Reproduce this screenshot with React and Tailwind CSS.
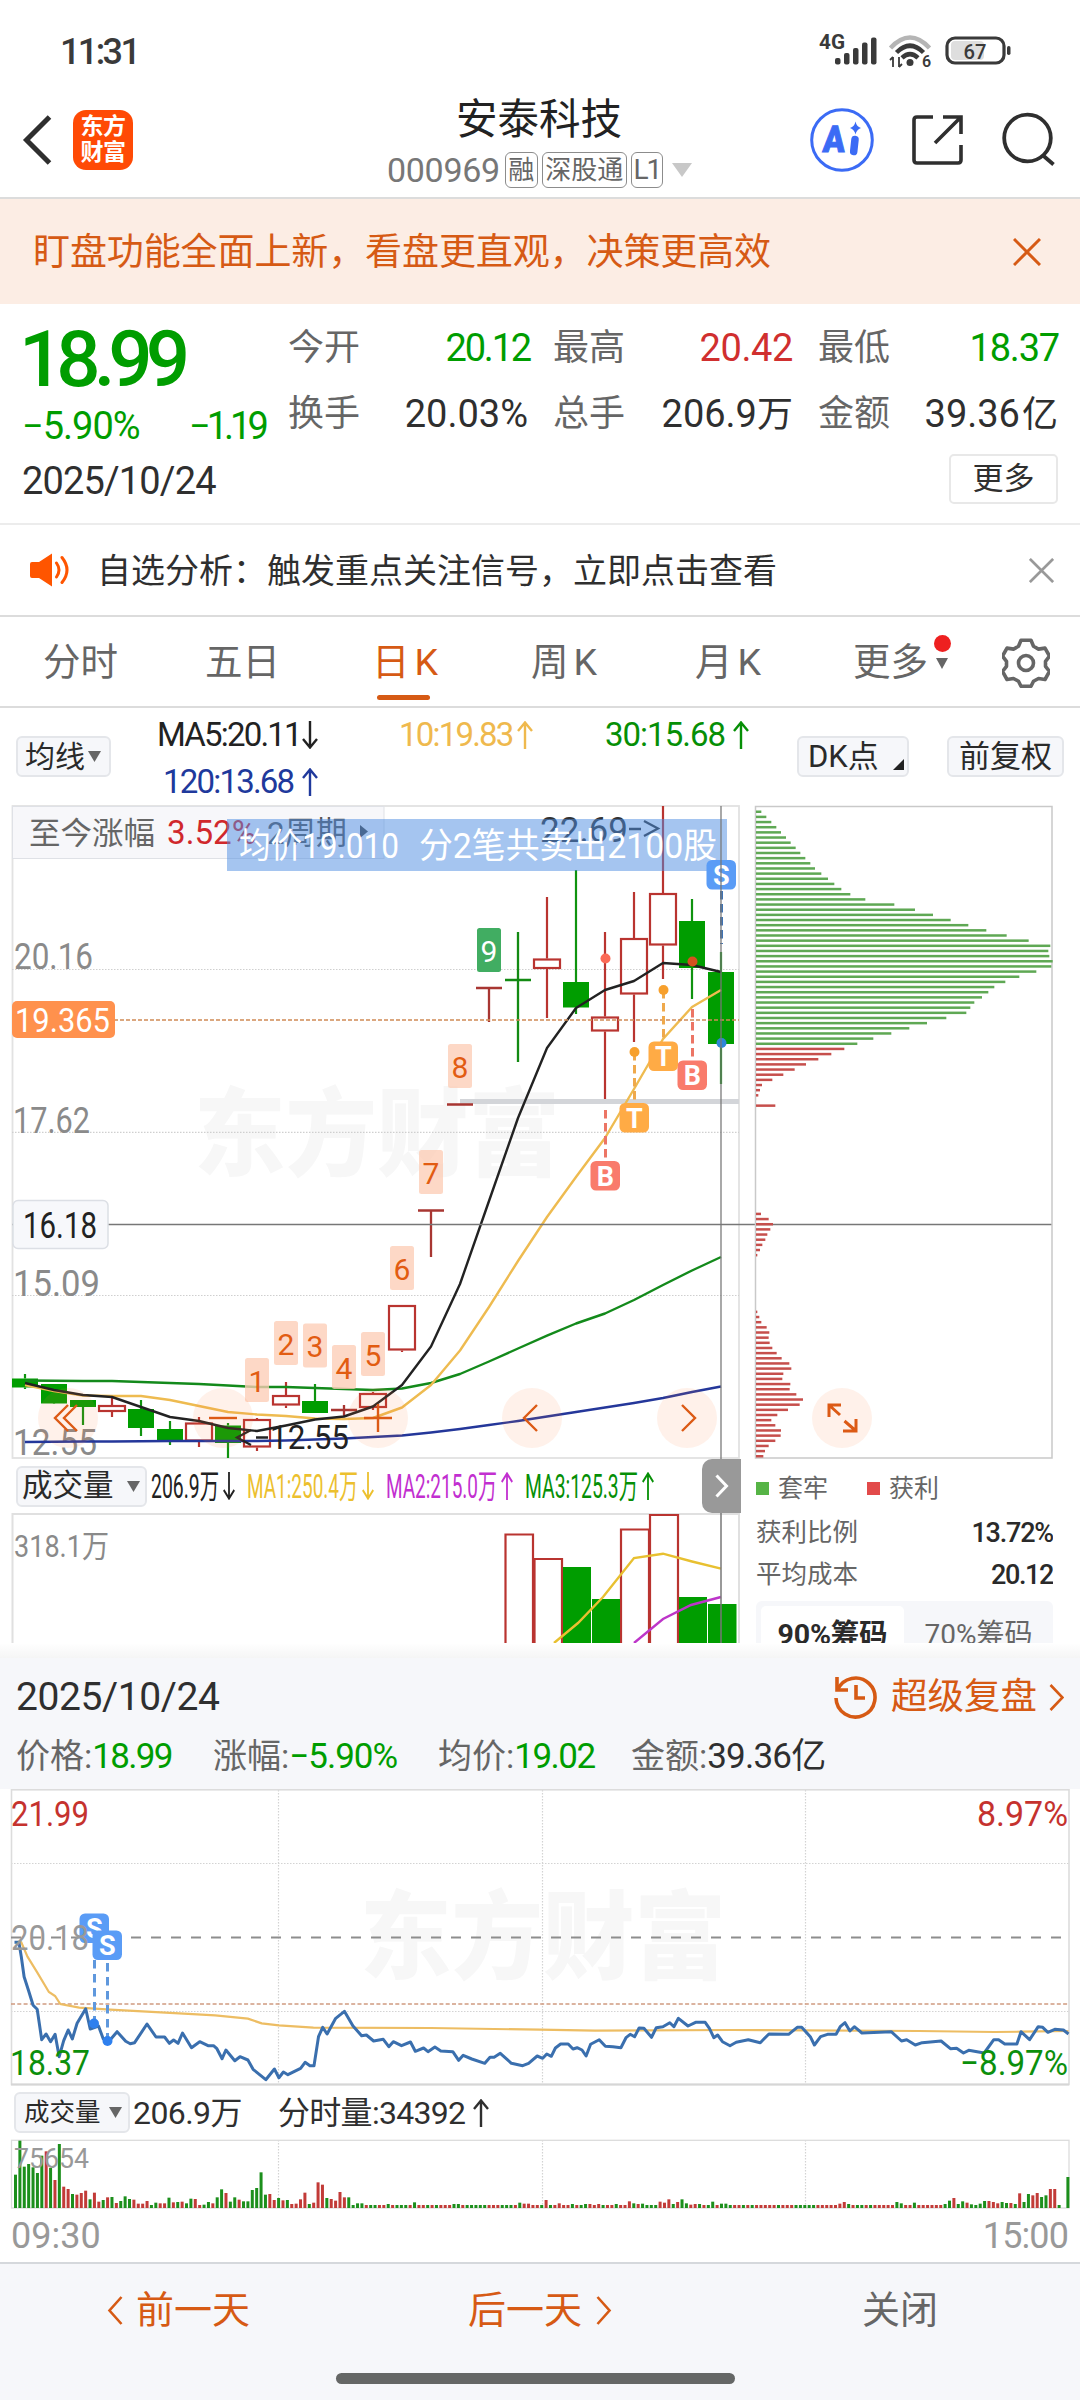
import React from "react";

const UP = "#c5322e";
const DOWN = "#009d00";
const PITCH = 29;
const FIRST_X = 25;

/* [direction, bodyTop, bodyBottom, high, low] */
const CANDLES = [
  ["d", 1378.5, 1387.5, 1374, 1389],
  ["d", 1384, 1403.5, 1384, 1404],
  ["d", 1400, 1407, 1400, 1425],
  ["u", 1405, 1412, 1397, 1417],
  ["d", 1409, 1428, 1400, 1436],
  ["d", 1429, 1442, 1421, 1445],
  ["u", 1422.5, 1441.5, 1417, 1447],
  ["d", 1425.5, 1443, 1423, 1458],
  ["u", 1419, 1447.5, 1418, 1451],
  ["u", 1395, 1405.5, 1382, 1408],
  ["d", 1401, 1413, 1384, 1413],
  ["u", 1410, 1410, 1405, 1417],
  ["u", 1393, 1408, 1392, 1410],
  ["u", 1305, 1350.5, 1305, 1352],
  ["u", 1210.5, 1210.5, 1210, 1257],
  ["u", 1104.5, 1104.5, 1104, 1105],
  ["u", 988, 988, 988, 1022],
  ["d", 980, 980, 932, 1062],
  ["u", 958.5, 969, 897, 1018],
  ["d", 982, 1007.5, 870, 1014],
  ["u", 1016.5, 1031.5, 932, 1099],
  ["u", 938, 994.5, 892, 1042],
  ["u", 893, 945.5, 806, 979],
  ["d", 921, 968, 899, 999],
  ["d", 972, 1044, 952, 1084],
];

const MA5 = [1383, 1390, 1395, 1397, 1407, 1417, 1421, 1428, 1431, 1425.5, 1419.5, 1416.5, 1406.5, 1385, 1346.5, 1284, 1201, 1118, 1048, 1008, 990, 981, 963, 965, 972];
const MA10 = [1385, 1391, 1395.5, 1396, 1396, 1400, 1406, 1412, 1414.5, 1416, 1418.5, 1419, 1418, 1407.5, 1385, 1350.5, 1307, 1261, 1217, 1177, 1138, 1089, 1039, 1007, 990];
const MA30 = [1380.5, 1380.7, 1381, 1381, 1382, 1383, 1384, 1385.5, 1387, 1387, 1388, 1389, 1390, 1388.5, 1383, 1374, 1361.5, 1348.5, 1335.7, 1323.5, 1313.5, 1300, 1285, 1270.5, 1257];
const MA120 = [1442, 1441.7, 1441.5, 1441.5, 1441.3, 1441, 1441, 1441, 1441, 1440.5, 1439.5, 1438.5, 1437, 1435.5, 1432.5, 1429, 1425, 1421, 1416.5, 1412, 1407.5, 1403, 1398, 1392, 1386.5];

const linePoints = (ys) => ys.map((y, i) => `${FIRST_X + i * PITCH},${y}`).join(" ");

const TAGS = [
  ["1", 257, 1358], ["2", 286, 1321], ["3", 315, 1323.5], ["4", 344, 1345], ["5", 373, 1332],
  ["6", 402, 1246], ["7", 431, 1150], ["8", 460, 1044], ["9", 489, 928],
];

const CHIPS_LOSS = [63, 78, 93, 108, 122, 137, 151, 166, 180, 195, 210, 224, 243, 263, 282, 303, 330, 375, 462, 524, 578, 631, 684, 738, 799, 865, 930, 924, 927, 937, 933, 888, 837, 795, 762, 744, 725, 702, 690, 678, 618, 560, 507, 453, 399, 351];
const CHIPS_GAIN = [
  [46, [312, 273, 234, 197, 163, 129, 96, 65, 59, 54]],
  [57, [105]],
  [78, [62, 85, 98, 90, 81, 75, 66, 59, 51]],
  [97, [51, 57, 63, 79, 87, 85, 88, 96, 109, 124, 147, 153, 129, 126, 150, 148, 168, 188, 178, 143, 111, 93, 105, 122, 121, 105, 85, 74, 69]],
];
const chipY = (i) => 811.6 + i * 5.156;

const PRICE = [[42,487],[55,487],[62,530],[70,590],[83,632],[96,676],[108,688],[121,779],[134,762],[147,785],[160,763],[172,830],[185,782],[198,750],[210,777],[224,730],[249,686],[262,747],[286,738],[300,777],[322,777],[340,755],[365,784],[378,791],[391,788],[427,732],[453,771],[478,771],[492,790],[504,780],[517,790],[530,759],[556,803],[580,785],[604,797],[620,797],[630,806],[645,836],[656,810],[682,842],[697,830],[720,840],[735,868],[772,899],[797,867],[810,893],[823,876],[836,884],[873,865],[886,847],[900,857],[912,857],[925,770],[937,742],[950,762],[975,715],[1000,694],[1025,738],[1050,767],[1064,765],[1085,783],[1113,778],[1129,800],[1142,785],[1166,797],[1192,786],[1206,814],[1230,804],[1243,815],[1263,801],[1280,813],[1315,815],[1332,841],[1345,826],[1370,837],[1408,850],[1423,832],[1435,832],[1453,820],[1485,850],[1518,857],[1535,850],[1560,828],[1576,835],[1588,822],[1601,829],[1613,804],[1628,792],[1650,792],[1664,807],[1676,803],[1690,810],[1702,828],[1715,793],[1740,779],[1758,799],[1780,800],[1803,803],[1818,773],[1830,763],[1843,770],[1856,744],[1870,745],[1892,772],[1906,743],[1925,740],[1945,728],[1957,740],[1970,715],[1998,738],[2020,727],[2048,727],[2060,745],[2073,773],[2084,765],[2098,785],[2120,797],[2138,787],[2173,779],[2208,788],[2233,762],[2290,763],[2315,742],[2328,742],[2353,770],[2365,795],[2383,770],[2403,763],[2428,763],[2440,740],[2454,728],[2468,753],[2481,740],[2503,759],[2588,755],[2618,783],[2633,779],[2658,795],[2678,788],[2733,783],[2760,806],[2778,805],[2798,819],[2813,811],[2858,819],[2886,779],[2900,779],[2918,792],[2953,792],[2965,755],[2990,779],[3015,740],[3028,742],[3043,757],[3063,748],[3088,750],[3103,762]];
const AVG = [[58,487],[62,487],[80,530],[108,577],[142,636],[160,648],[175,672],[230,683],[320,689],[520,700],[625,706],[720,716],[760,730],[810,736],[910,743],[1250,744],[1568,749],[1728,752],[2128,750],[2668,753],[2888,756],[2968,755],[3103,753]];
const scalePts = (pts) => pts.map(([x, y]) => `${(x / 2.904).toFixed(1)},${(1780 + y / 3).toFixed(1)}`).join(" ");

const MINUTE_VOL = (
  "g100 g202 g124 g132 g122 g105 g157 r170 g120 r84 g192 r64 r57 g42 r40 r45 r52 g26 r46 r19 g24 r32 g33 r15 g21 g35 g27 r25 r13 r13 r21 g9 g16 r14 r14 g31 r17 g18 r19 g14 g28 r27 r9 g10 g18 r14 g32 g56 r45 g19 g32 r25 g20 g20 g54 g60 g107 g40 r42 r24 g30 r23 g24 r12 r13 r26 r46 g12 r16 r77 r70 g30 r27 r22 r48 r32 g32 g9 g14 g14 " +
  "r9 g9 g9 r9 r9 g12 r9 g9 g9 g9 r9 g17 r9 r9 g9 r9 g9 r9 r9 r9 g12 g12 r9 g9 g9 g9 g9 g9 r9 r9 r9 g9 g9 g9 r9 g16 r13 r13 r9 r9 " +
  "g9 r24 g9 r9 r14 r9 r9 g12 r9 g9 g12 r12 r9 r12 g9 r9 r9 g12 r9 r9 r20 g14 r12 g13 g9 g9 g9 r19 r16 r26 g12 r18 g26 g14 r10 r12 g12 r9 g9 g19 r9 g13 g13 g9 r9 r9 g9 r9 g9 r9 r9 r9 r9 r9 g9 r9 r9 r9 g9 g9 g9 g9 g9 r9 r9 r9 r9 r9 r13 r18 g12 r9 g9 g9 r9 g9 r9 r9 r9 r9 r9 g18 g14 r9 r9 g16 r9 r9 r9 r9 r9 r9 g12 g22 r30 g12 g20 r16 g11 g9 g13 g21 r21 r18 r14 g18 g15 r15 g12 r44 g18 g42 r38 r45 g33 g38 r57 r57 g9 g0 g93"
).split(" ").map((s) => [s[0], Number(s.slice(1))]);

/* Chart label stretched to a known advance width */
function Label({ x, y, w, size = 36, fill = "#999", children, weight = 400 }) {
  return (
    <text x={x} y={y} fontSize={size} fill={fill} fontWeight={weight} textLength={w} lengthAdjust="spacingAndGlyphs">
      {children}
    </text>
  );
}

function Watermark({ x, y }) {
  return (
    <text x={x - 3} y={y} fontSize="96" fontWeight="900" fill="#f7f7f7" textLength="366" lengthAdjust="spacingAndGlyphs">
      东方财富
    </text>
  );
}

function Marker({ x, y, color, children }) {
  return (
    <g>
      <rect x={x} y={y} width="29.5" height="29.5" rx="5.5" fill={color} />
      <text x={x + 14.75} y={y + 24.5} fontSize="27" fontWeight="700" fill="#fff" textAnchor="middle">
        {children}
      </text>
    </g>
  );
}

function StatusBar() {
  return (
    <div className="flex h-[100px] items-center justify-between pl-[60px] pr-[68px]">
      <span className="mt-[4px] text-[36px] font-medium leading-none tracking-[-2.6px] text-[#3a3a3a]">11:31</span>
      <svg width="194" height="44" viewBox="818 28 194 44" fill="#3a3a3a">
        <text x="819" y="49" fontSize="20" fontWeight="700" textLength="26" lengthAdjust="spacingAndGlyphs">4G</text>
        <rect x="835" y="58" width="5.5" height="6.5" rx="2" />
        <rect x="844" y="53" width="5.5" height="11.5" rx="2" />
        <rect x="853" y="48" width="5.5" height="16.5" rx="2" />
        <rect x="862" y="42.500" width="5.5" height="22" rx="2" />
        <rect x="871" y="37.500" width="5.5" height="27" rx="2" />
        <g fill="none" strokeWidth="4.500">
          <path d="M890.500 48Q910 27 929.500 48" stroke="#b5b5b5" />
          <path d="M896.500 52.500Q910 39 923.500 52.500" stroke="#3a3a3a" />
          <path d="M902 57.800Q910 50.500 918 57.800" stroke="#3a3a3a" />
        </g>
        <circle cx="910" cy="62.500" r="3.500" />
        <path d="M893 57v10M890 60l3-3M899 57v10M902 64l-3 3" stroke="#3a3a3a" strokeWidth="1.8" fill="none" />
        <text x="922" y="67" fontSize="16" fontWeight="600">6</text>
        <rect x="947" y="38" width="57" height="25" rx="8" fill="none" stroke="#3a3a3a" strokeWidth="3.200" />
        <rect x="951" y="41" width="33" height="19" rx="4" fill="#dedede" />
        <rect x="1007" y="46" width="3.500" height="9" rx="1.700" />
        <text x="963.500" y="58.500" fontSize="21" fontWeight="500" textLength="23" lengthAdjust="spacingAndGlyphs">67</text>
      </svg>
    </div>
  );
}

function Pill({ children, className = "" }) {
  return (
    <span className={`flex h-[36px] items-center justify-center rounded-[6px] border-[1.5px] border-[#8c8c8c] text-[26px] leading-none text-[#666] ${className}`}>
      {children}
    </span>
  );
}

function Header() {
  return (
    <header className="flex h-[99px] items-start border-b-2 border-[#dcdcdc] pl-[22px] pr-[24px]">
      <svg className="mt-[15px] shrink-0" width="30" height="50" viewBox="22 115 30 50" fill="none" stroke="#2f2f2f" strokeWidth="5">
        <path d="M49.500 117L26.500 140l23 23" />
      </svg>
      <div className="ml-[21px] mt-[10px] flex h-[60px] w-[60px] shrink-0 flex-col items-center justify-center rounded-[13px] bg-[#ff4a05] text-[23px] font-bold leading-[26px] tracking-[-0.500px] text-white">
        <span>东方</span>
        <span>财富</span>
      </div>
      <div className="ml-[254px] flex w-[304px] flex-col items-start">
        <h1 className="ml-[69px] mt-[-2px] whitespace-nowrap text-[41.500px] leading-[44px] text-[#222]">安泰科技</h1>
        <div className="mt-[10px] flex items-center">
          <span className="mr-[5px] text-[34px] leading-none tracking-[-0.300px] text-[#777]">000969</span>
          <Pill className="w-[33px]">融</Pill>
          <Pill className="ml-[4px] w-[85px]">深股通</Pill>
          <Pill className="ml-[4px] w-[32px] text-[28px] tracking-[-2px]">L1</Pill>
          <svg className="ml-[9px]" width="20" height="14" viewBox="0 0 20 14"><path d="M0 0h20L10 14z" fill="#c8c8c8" /></svg>
        </div>
      </div>
      <svg className="ml-auto mt-[8px]" width="66" height="64" viewBox="809 108 66 64">
        <circle cx="842" cy="140" r="30.300" fill="none" stroke="#3b6bf5" strokeWidth="3" />
        <text x="823" y="152" fontSize="37" fontWeight="900" fill="#3b6bf5" stroke="#3b6bf5" strokeWidth="1" transform="skewX(-4) translate(10 0)" textLength="22" lengthAdjust="spacingAndGlyphs">A</text>
        <path d="M855 139.500l-1.300 12" stroke="#3b6bf5" strokeWidth="7.500" strokeLinecap="round" />
        <path d="M855.500 121.500q1 5 5.500 6.500q-4.500 1.500-5.500 6.500q-1-5-5.500-6.500q4.500-1.500 5.500-6.500z" fill="#3b6bf5" />
      </svg>
      <svg className="ml-[35px] mt-[13px]" width="54" height="54" viewBox="910 113 54 54" fill="none" stroke="#2f2f2f" strokeWidth="3.600">
        <path d="M933 117H917q-3 0-3 3v40q0 3 3 3h41q3 0 3-3V145" />
        <path d="M943 117h18v17M961 117L935 143" />
      </svg>
      <svg className="ml-[38px] mt-[12px]" width="54" height="56" viewBox="1001 112 54 56" fill="none" stroke="#2f2f2f" strokeWidth="3.800">
        <circle cx="1026.500" cy="138" r="23.300" />
        <path d="M1041.500 155l11 9.500" />
      </svg>
    </header>
  );
}

function Cross({ size, color, width }) {
  return (
    <svg width={size} height={size} viewBox="0 0 28 28" stroke={color} strokeWidth={width}>
      <path d="M1 1l26 26M27 1L1 27" />
    </svg>
  );
}

function PromoBanner() {
  return (
    <div className="flex h-[105px] items-center justify-between bg-[#fcede4] pl-[33px] pr-[39px]">
      <span className="mt-[1px] whitespace-nowrap text-[37px] leading-none tracking-[-0.1px] text-[#d65a14]">盯盘功能全面上新，看盘更直观，决策更高效</span>
      <Cross size={28} color="#d65a14" width={3} />
    </div>
  );
}

function Stat({ label, value, className = "", valueClass = "" }) {
  return (
    <div className={`flex items-center justify-between whitespace-nowrap leading-none ${className}`}>
      <span className="text-[36px] text-[#666]">{label}</span>
      <span className={valueClass}>{value}</span>
    </div>
  );
}

function Quote() {
  return (
    <section className="h-[221px] border-b-2 border-[#ececec] pl-[22px] pr-[22px]">
      <div className="flex h-[145px]">
        <div className="w-[266px]">
          <div className="ml-[-3px] mt-[16px] text-[78px] font-medium leading-[80px] tracking-[-7px] text-[#009d00]">18.99</div>
          <div className="mt-[6px] flex text-[38px] leading-[40px] text-[#009d00]">
            <span className="w-[167px] tracking-[-1px]">−5.90%</span>
            <span className="tracking-[-4px]">−1.19</span>
          </div>
        </div>
        <div className="mt-[25px] grid h-[104px] grid-cols-[240px_240px_240px] grid-rows-[38px_38px] content-start gap-x-[25px] gap-y-[28px] text-[38px] text-[#2f2f2f]">
          <Stat label="今开" value="20.12" valueClass="mr-[-2px] text-[#009d00] tracking-[-2.200px]" />
          <Stat label="最高" value="20.42" valueClass="text-[#d02f2f] tracking-[-0.400px]" />
          <Stat label="最低" value="18.37" valueClass="mr-[-1px] text-[#009d00] tracking-[-1.200px]" />
          <Stat label="换手" value="20.03%" />
          <Stat label="总手" value={<>206.9<span className="text-[36px]">万</span></>} />
          <Stat label="金额" value={<>39.36<span className="ml-[2px] text-[36px]">亿</span></>} />
        </div>
      </div>
      <div className="mt-[5px] flex items-center justify-between">
        <span className="mt-[3px] text-[38px] leading-none tracking-[-0.850px] text-[#2f2f2f]">2025/10/24</span>
        <span className="flex h-[50px] w-[109px] items-center justify-center rounded-[5px] border-2 border-[#e8e8e8] pb-[1px] text-[31px] leading-none text-[#2f2f2f]">更多</span>
      </div>
    </section>
  );
}

function Notice() {
  return (
    <div className="flex h-[92px] items-center border-b-2 border-[#dcdcdc] pl-[29px] pr-[26px]">
      <svg width="42" height="34" viewBox="28 553 42 34">
        <path d="M31 562h7l13-8.500v33L38 578h-7q-2 0-2-2v-12q0-2 2-2z" fill="#ff5500" />
        <path d="M55.500 563q5 7 0 14M61 557.500q10 12.500 0 25" fill="none" stroke="#ff5500" strokeWidth="3" strokeLinecap="round" />
      </svg>
      <span className="ml-[26px] mt-[2px] whitespace-nowrap text-[34px] leading-none text-[#2f2f2f]">自选分析：触发重点关注信号，立即点击查看</span>
      <span className="ml-auto"><Cross size={25} color="#999" width={3} /></span>
    </div>
  );
}

function Gear() {
  return (
    <svg width="48" height="50" viewBox="-24 -25 48 50" fill="none" stroke="#666" strokeWidth="3.600" strokeLinejoin="round">
      <path d="M-5 -21.500h10l2.500 6 5 2.800 6.500-1 4.500 8-4 5.200v5l4 5.200-4.500 8-6.500-1-5 2.800-2.500 5h-10l-2.500-5-5-2.800-6.500 1-4.500-8 4-5.200v-5l-4-5.200 4.500-8 6.500 1 5-2.800z" transform="translate(0 -1.200)" />
      <circle r="7.500" />
    </svg>
  );
}

function Tabs() {
  return (
    <nav className="flex h-[91px] items-center whitespace-nowrap border-b-2 border-[#dcdcdc] pt-[2px] text-[37.500px] leading-none text-[#666]">
      <span className="ml-[43px] w-[162px]">分时</span>
      <span className="w-[167px]">五日</span>
      <span className="relative w-[159px] text-[#d65a14]">
        日<span className="ml-[5px]">K</span>
        <i className="absolute left-[5px] top-[51px] h-[5px] w-[53px] rounded-full bg-[#d65a14]" />
      </span>
      <span className="w-[164px]">周<span className="ml-[5px]">K</span></span>
      <span className="w-[158px]">月<span className="ml-[5px]">K</span></span>
      <span className="relative w-[149px]">
        更多
        <i className="absolute left-[81px] top-[-9px] h-[17px] w-[17px] rounded-full bg-[#ee2020]" />
        <svg className="absolute left-[83px] top-[14px]" width="12" height="11" viewBox="0 0 12 11"><path d="M0 0h12L6 11z" fill="#666" /></svg>
      </span>
      <Gear />
    </nav>
  );
}

function Chip({ children, className = "" }) {
  return (
    <span className={`flex h-[41px] shrink-0 items-center rounded-[6px] border-2 border-[#e4e6ea] bg-[#f6f7fa] leading-none text-[#2a2a2a] ${className}`}>
      {children}
    </span>
  );
}

function Caret({ className = "" }) {
  return <svg className={className} width="13" height="11" viewBox="0 0 13 11"><path d="M0 0h13L6.500 11z" fill="#666" /></svg>;
}

function Arrow({ up, className = "" }) {
  return (
    <svg className={`inline-block ${className}`} width="16" height="28" viewBox="0 0 16 28" fill="none" stroke="currentColor" strokeWidth="2.400">
      <path d={up ? "M8 28V2M1 10L8 1.500l7 8.500" : "M8 0v26M1 18l7 8.500 7-8.500"} />
    </svg>
  );
}

function Average({ up, className = "", children }) {
  return (
    <span className={`flex items-center justify-between ${className}`}>
      {children}
      <Arrow up={up} />
    </span>
  );
}

function MaRow() {
  return (
    <div className="flex h-[97px] items-center whitespace-nowrap pl-[16px] pr-[16px]">
      <Chip className="w-[95px] pl-[7px] text-[30px]">均线<Caret className="ml-[3px]" /></Chip>
      <div className="ml-[46px] grid w-[640px] shrink-0 grid-cols-[242px_206px_192px] gap-y-[13px] pt-[4px] text-[33px] leading-[34px]">
        <Average className="w-[161px] tracking-[-1.800px] text-[#222]">MA5:20.11</Average>
        <Average up className="w-[134px] tracking-[-1.800px] text-[#efb94e]">10:19.83</Average>
        <Average up className="w-[144px] tracking-[-1px] text-[#068f06]">30:15.68</Average>
        <Average up className="w-[161px] pl-[6px] tracking-[-1.800px] text-[#20399c]">120:13.68</Average>
      </div>
      <Chip className="w-[112px] pl-[9px] text-[31px]">
        DK点
        <svg className="ml-auto mr-[3px] mt-[16px]" width="11" height="11" viewBox="0 0 11 11"><path d="M11 0v11H0z" fill="#222" /></svg>
      </Chip>
      <Chip className="ml-auto w-[117px] justify-center text-[31px]">前复权</Chip>
    </div>
  );
}

function Candle({ i, data }) {
  const [dir, top, bottom, high, low] = data;
  const x = FIRST_X + i * PITCH;
  const up = dir === "u";
  const color = up ? UP : DOWN;
  if (bottom === top) {
    return (
      <g stroke={up ? "#a83632" : "#138a13"} strokeWidth="2.300">
        <path d={`M${x - 13} ${top}h26M${x} ${high}V${low}`} />
      </g>
    );
  }
  return (
    <g stroke={up ? "#b93430" : "#0f930f"} strokeWidth="2.200">
      <path d={`M${x} ${high}V${top}M${x} ${bottom}V${low}`} />
      {up ? (
        <rect x={x - 13} y={top + 1} width="26" height={bottom - top - 2} fill="none" />
      ) : (
        <rect x={x - 13} y={top} width="26" height={bottom - top} fill={color} stroke="none" />
      )}
    </g>
  );
}

function KLineChart() {
  return (
    <svg className="block" width="1080" height="655" viewBox="0 805 1080 655">
      <Watermark x="197" y="1168" />
      <rect x="12.500" y="806" width="726.500" height="652" fill="none" stroke="#e2e2e2" strokeWidth="1.800" />
      <g stroke="#cfcfcf" strokeWidth="1.200" strokeDasharray="1.500 1.500">
        <path d="M12 969.500H739M12 1132.300H739M12 1295.500H739" />
      </g>
      <rect x="12.500" y="806.500" width="371.500" height="52" fill="#f7f7fa" stroke="#dfe1e6" strokeWidth="1" />
      <Label x={29} y={844} w={126} size={31} fill="#666">至今涨幅</Label>
      <Label x={167} y={844} w={89} size={34} fill="#d0282c">3.52%</Label>
      <Label x={267} y={844} w={80} size={32} fill="#555">2周期</Label>
      <path d="M360 825v13l8-6.500z" fill="#444" />

      <Label x={14} y={969} w={79} size={36} fill="#8a8a8a">20.16</Label>
      <Label x={13} y={1133} w={77} size={36} fill="#8a8a8a">17.62</Label>
      <Label x={13} y={1296} w={87} size={36} fill="#8a8a8a">15.09</Label>
      <Label x={13} y={1455} w={84} size={36} fill="#8a8a8a">12.55</Label>

      <rect x="460" y="1099" width="279" height="5" fill="#d3d5d9" />

      {CANDLES.map((c, i) => <Candle key={i} i={i} data={c} />)}

      <Label x={540} y={842} w={88} size={35} fill="#333">22.69</Label>
      <path d="M629 829h12M644 821l14 7.500-14 7.500" fill="none" stroke="#333" strokeWidth="2.300" />

      <g fill="none" strokeWidth="2.400" strokeLinejoin="round">
        <polyline points={linePoints(MA120)} stroke="#24379a" />
        <polyline points={linePoints(MA30)} stroke="#138a1b" />
        <polyline points={linePoints(MA10)} stroke="#eebb50" />
        <polyline points={linePoints(MA5)} stroke="#222" />
      </g>

      {TAGS.map(([n, x, y]) => (
        <g key={n}>
          <rect x={x - 12} y={y} width="24" height="44" rx="2.500" fill={n === "9" ? "#41ad62" : "#fdcdb6"} fillOpacity={n === "9" ? 1 : 0.78} />
          <text x={x} y={y + 33.500} fontSize="30" textAnchor="middle" fill={n === "9" ? "#fff" : "#e25c12"}>{n}</text>
        </g>
      ))}

      <path d="M12 1020H739" stroke="#cf8a55" strokeWidth="1.500" strokeDasharray="4 2" />
      <rect x="12" y="1001" width="103" height="37" rx="5" fill="#ff914d" />
      <Label x={15} y={1032} w={95} size={34} fill="#fff">19.365</Label>

      <path d="M251 1430l-14 7.500 14 7.500M256 1437.500h12" fill="none" stroke="#222" strokeWidth="2.300" />
      <Label x={270} y={1449} w={79} size={34} fill="#222">12.55</Label>

      <g fill="#ff7b3d" fillOpacity="0.11">
        <circle cx="68" cy="1418" r="30" />
        <circle cx="223" cy="1418" r="30" />
        <circle cx="378" cy="1418" r="30" />
        <circle cx="532" cy="1418" r="30" />
        <circle cx="687" cy="1418" r="30" />
        <circle cx="842" cy="1418" r="30" />
      </g>
      <g fill="none" stroke="#dc5a15" strokeWidth="2.400">
        <path d="M68 1405l-13 13 13 13M77 1405l-13 13 13 13" />
        <path d="M209 1418h28" />
        <path d="M364 1418h28M378 1404v28" />
        <path d="M537 1405l-13 13 13 13" />
        <path d="M682 1405l13 13-13 13" />
        <path d="M841 1405H829v12M829 1405l11 10M843 1431h13v-12M856 1431l-11.500-10" strokeWidth="3" />
      </g>

      <path d="M12 1224.500H1052" stroke="#777" strokeWidth="1.500" />
      <rect x="13" y="1200.500" width="95" height="48" rx="5" fill="#f7f8fb" stroke="#dcdfe5" strokeWidth="1.500" />
      <Label x={23} y={1238} w={74} size={36} fill="#222">16.18</Label>

      <g fill="none" strokeWidth="3" strokeDasharray="8.500 4.500">
        <path d="M605.500 1110V1160" stroke="#ec7565" />
        <path d="M692.500 1009V1059" stroke="#ec7565" />
        <path d="M634.500 1052V1102" stroke="#efa94c" />
        <path d="M663.500 990V1041" stroke="#efa94c" />
      </g>
      <circle cx="605.500" cy="958.500" r="5" fill="#fb6a56" />
      <circle cx="692.500" cy="961.500" r="5" fill="#d4501f" />
      <circle cx="634.500" cy="1052" r="5" fill="#f7a02c" />
      <circle cx="663.500" cy="990" r="5" fill="#f7a02c" />
      <circle cx="721.500" cy="1043" r="5" fill="#2f86d6" />
      <Marker x={590.500} y={1161} color="#f97b6b">B</Marker>
      <Marker x={677.500} y={1060.500} color="#f97b6b">B</Marker>
      <Marker x={619.500} y={1103} color="#ffab45">T</Marker>
      <Marker x={648.500} y={1041.500} color="#ffab45">T</Marker>

      <rect x="227" y="819" width="500" height="52" fill="#4b8be2" fillOpacity="0.5" />
      <Label x={239} y={858} w={160} size={35} fill="#fff">均价19.010</Label>
      <Label x={419} y={858} w={298} size={35} fill="#fff">分2笔共卖出2100股</Label>
      <path d="M721.500 891V944" stroke="#3f73b3" strokeWidth="3" strokeDasharray="8.500 4.500" />
      <Marker x={706.500} y={860} color="#5a9cf6">S</Marker>
      <path d="M721 806V1460" stroke="#777" strokeOpacity="0.75" strokeWidth="1.700" />

      <rect x="755.500" y="806.500" width="296.500" height="651.500" fill="none" stroke="#c9c9c9" strokeWidth="1.500" />
      {CHIPS_LOSS.map((r, i) => (
        <rect key={i} x="756" y={chipY(i) - 1.100} width={(r - 47) / 3} height="2.500" fill="#5fa854" />
      ))}
      {CHIPS_GAIN.map(([start, list]) =>
        list.map((r, k) => (
          <rect key={start + k} x="756" y={chipY(start + k) - 1.100} width={(r - 47) / 3} height="2.500" fill="#c64f4c" />
        ))
      )}
    </svg>
  );
}

function Narrow({ children, className = "", arrow }) {
  return (
    <span className={`flex shrink-0 items-center ${className}`}>
      {children}
      <Arrow up={arrow === "up"} className="ml-[2px] scale-x-75" />
    </span>
  );
}

function Squeeze({ width, color, children }) {
  return (
    <svg width={width} height="36" viewBox={`0 0 ${width} 36`}>
      <text x="0" y="30" fontSize="33" fill={color} textLength={width} lengthAdjust="spacingAndGlyphs">{children}</text>
    </svg>
  );
}

function VolumePanel() {
  return (
    <div className="w-[741px]">
      <div className="flex h-[54px] items-center pl-[16px]">
        <Chip className="w-[131px] pl-[4px] text-[30.500px]">成交量<Caret className="ml-[13px]" /></Chip>
        <Narrow className="ml-[4px] w-[96px] text-[#222]" arrow="down"><Squeeze width={68} color="#222">206.9万</Squeeze></Narrow>
        <Narrow className="w-[139px] text-[#ecc02e]" arrow="down"><Squeeze width={111} color="#ecc02e">MA1:250.4万</Squeeze></Narrow>
        <Narrow className="w-[139px] text-[#c22fd0]" arrow="up"><Squeeze width={111} color="#c22fd0">MA2:215.0万</Squeeze></Narrow>
        <Narrow className="w-[139px] text-[#068f06]" arrow="up"><Squeeze width={113} color="#068f06">MA3:125.3万</Squeeze></Narrow>
        <span className="ml-auto flex h-[54px] w-[39px] items-center justify-center rounded-l-[10px] bg-[#999]">
          <svg width="14" height="24" viewBox="0 0 14 24" fill="none" stroke="#fff" strokeWidth="3"><path d="M1.500 1.500l10 10.500-10 10.500" /></svg>
        </span>
      </div>
      <svg className="block" width="741" height="130" viewBox="0 1513 741 130">
        <path d="M12.500 1643V1514H739V1643" fill="none" stroke="#e0e0e0" strokeWidth="2" />
        <Label x={14} y={1557} w={95} size={31} fill="#8a8a8a">318.1万</Label>
        <g fill="none" stroke="#b93430" strokeWidth="2.200">
          <path d="M505.500 1650V1534.500H533V1650" />
          <path d="M534.500 1650V1559H562V1650" />
          <path d="M621 1650V1529.500H649V1650" />
          <path d="M650 1650V1515H678V1650" />
        </g>
        <g fill={DOWN}>
          <rect x="563" y="1567" width="28" height="80" />
          <rect x="592" y="1599" width="28" height="50" />
          <rect x="679" y="1597" width="28" height="50" />
          <rect x="708" y="1604" width="28.500" height="50" />
        </g>
        <g fill="none" strokeWidth="2.400">
          <polyline points="554,1643 578,1623 603,1597 634,1558 663,1553.700 692,1561.500 721,1568.700" stroke="#e8c030" />
          <polyline points="634,1643 663,1619 691,1605 721,1597" stroke="#bd35c9" />
        </g>
        <path d="M721 1513V1643" stroke="#777" strokeWidth="1.500" />
      </svg>
    </div>
  );
}

function CostPanel() {
  return (
    <div className="ml-[15px] h-[184px] w-[297px] overflow-hidden whitespace-nowrap text-[25px] leading-none text-[#666]">
      <div className="mt-[15px] flex h-[28px] items-center">
        <i className="mr-[9px] h-[13px] w-[13px] bg-[#56b446]" />套牢
        <i className="ml-[39px] mr-[9px] h-[13px] w-[13px] bg-[#e24a4a]" />获利
      </div>
      <div className="mt-[18px] flex h-[26px] items-center justify-between text-[25.500px]">
        获利比例<b className="text-[27px] font-medium tracking-[-1.200px] text-[#2a2a2a]">13.72%</b>
      </div>
      <div className="mt-[16px] flex h-[26px] items-center justify-between text-[25.500px]">
        平均成本<b className="text-[27px] font-medium tracking-[-1.400px] text-[#2a2a2a]">20.12</b>
      </div>
      <div className="mt-[13px] flex h-[60px] rounded-t-[6px] bg-[#f6f7fa] pl-[5px] pt-[5px]">
        <div className="flex h-[58px] w-[143px] items-center justify-center rounded-[5px] bg-white text-[28.500px] font-bold tracking-[-0.200px] text-[#2a2a2a]">90%筹码</div>
        <div className="flex h-[58px] flex-1 items-center justify-center text-[28px]">70%筹码</div>
      </div>
    </div>
  );
}

function Pair({ label, value, className = "", valueClass = "" }) {
  return (
    <span className={`flex items-center ${className}`}>
      <span className="text-[34px] text-[#666]">{label}</span>
      <span className={`text-[35px] ${valueClass}`}>{value}</span>
    </span>
  );
}

function SheetHeader() {
  return (
    <div className="h-[131px] whitespace-nowrap bg-[#f6f7fa] pl-[16px] pr-[16px]">
      <div className="flex h-[76px] items-center pt-[2px]">
        <span className="text-[39px] leading-none tracking-[-0.400px] text-[#2f2f2f]">2025/10/24</span>
        <svg className="ml-auto" width="46" height="46" viewBox="831 1674 46 46" fill="none" stroke="#d65a14" strokeWidth="3.600">
          <path d="M836.500 1690A19.500 19.500 0 1 1 835 1698" />
          <path d="M836 1677v13h11" />
          <path d="M855 1685v13h9" />
        </svg>
        <span className="ml-[13px] text-[36.500px] leading-none text-[#d65a14]">超级复盘</span>
        <svg className="ml-[12px]" width="15" height="27" viewBox="0 0 15 27" fill="none" stroke="#d65a14" strokeWidth="2.600"><path d="M1.500 1l12 12.500-12 12.500" /></svg>
      </div>
      <div className="flex h-[44px] items-center leading-none">
        <Pair className="w-[197px]" label="价格:" value="18.99" valueClass="tracking-[-1.700px] text-[#009d00]" />
        <Pair className="w-[225px]" label="涨幅:" value="−5.90%" valueClass="tracking-[-1px] text-[#009d00]" />
        <Pair className="w-[193px]" label="均价:" value="19.02" valueClass="tracking-[-1.500px] text-[#009d00]" />
        <Pair label="金额:" value="39.36亿" valueClass="tracking-[-0.800px] text-[#2f2f2f]" />
      </div>
    </div>
  );
}

function MinuteChart() {
  return (
    <svg className="block" width="1080" height="297" viewBox="0 1789 1080 297">
      <Watermark x="363" y="1971" />
      <g fill="none" stroke="#d3d3d3" strokeWidth="1.200" strokeDasharray="1.500 1.500">
        <path d="M11 1863.500H1069M11 2011.500H1069M278.500 1790V2084M542.500 1790V2084M805.500 1790V2084" />
      </g>
      <rect x="11.500" y="1789.800" width="1057.500" height="294.700" fill="none" stroke="#dcdcdc" strokeWidth="1.600" />
      <path d="M11 2084.500H1069" stroke="#d6d6d6" strokeWidth="2" />
      <path d="M11 1937.500H1067" stroke="#8e8e8e" strokeWidth="2" strokeDasharray="10 10" />
      <path d="M11 2004H1069" stroke="#cf9a80" strokeWidth="1.500" strokeDasharray="4 2.300" />
      <polyline points={scalePts(AVG)} fill="none" stroke="#edbd63" strokeWidth="2.200" />
      <polyline points={scalePts(PRICE)} fill="none" stroke="#3a6fae" strokeWidth="3" strokeLinejoin="round" />
      <g stroke="#5f98dd" strokeWidth="3" strokeDasharray="8.500 5.500">
        <path d="M94.500 1960V2020M107.500 1963V2040" />
      </g>
      <circle cx="94" cy="2023.500" r="5" fill="#2f80ee" />
      <circle cx="107.500" cy="2041" r="5" fill="#2f80ee" />
      <Marker x={79.500} y={1913.500} color="#5a9cf6">S</Marker>
      <Marker x={92.500} y={1930.500} color="#5a9cf6">S</Marker>
      <Label x={11} y={1826} w={78} size={35} fill="#c5322e">21.99</Label>
      <Label x={11} y={1950} w={78} size={35} fill="#999">20.18</Label>
      <Label x={10} y={2075} w={80} size={35} fill="#0c8f0c">18.37</Label>
      <Label x={977} y={1826} w={91} size={35} fill="#c5322e">8.97%</Label>
      <Label x={960} y={2075} w={108} size={35} fill="#0c8f0c">−8.97%</Label>
    </svg>
  );
}

function MinuteVolume() {
  return (
    <>
      <div className="flex h-[53px] items-center pl-[14px] text-[32px] leading-none text-[#2f2f2f]">
        <Chip className="w-[116px] pl-[8px] text-[25.500px]">成交量<Caret className="ml-[8px]" /></Chip>
        <span className="ml-[3px] w-[145px] tracking-[-0.600px]">206.9万</span>
        <span className="tracking-[-0.700px]">分时量:34392</span>
        <Arrow up className="ml-[8px]" />
      </div>
      <svg className="block" width="1080" height="71" viewBox="0 2139 1080 71">
        <path d="M278.500 2140V2208M542.500 2140V2208M805.500 2140V2208" stroke="#d3d3d3" strokeWidth="1.200" strokeDasharray="1.500 1.500" />
        <rect x="11.500" y="2140.300" width="1057.500" height="67.700" fill="none" stroke="#dcdcdc" strokeWidth="1.300" />
        {MINUTE_VOL.map(([c, h], i) => (
          <rect key={i} x={15.500 + i * 4.385 - 1.500} y={2208 - h / 3} width="3" height={h / 3} fill={c === "g" ? "#1c8f1c" : "#c23b38"} />
        ))}
        <Label x={14} y={2168} w={75} size={27} fill="#999">75654</Label>
      </svg>
      <div className="flex h-[52px] items-start justify-between pl-[11px] pr-[12px] pt-[8px] text-[36px] leading-[36px] text-[#999]">
        <span>09:30</span>
        <span className="tracking-[-0.900px]">15:00</span>
      </div>
    </>
  );
}

function Footer() {
  return (
    <footer className="h-[139px] border-t-2 border-[#d5d8dc] bg-[#f6f7fa]">
      <div className="grid h-[92px] grid-cols-3 items-center text-[38px] leading-none text-[#d65a14]">
        <span className="flex items-center justify-center gap-[13px] pr-[3px]">
          <svg width="16" height="29" viewBox="0 0 16 29" fill="none" stroke="currentColor" strokeWidth="2.600"><path d="M14.500 1l-12 13.500 12 13.500" /></svg>
          前一天
        </span>
        <span className="flex items-center justify-center gap-[14px]">
          后一天
          <svg width="16" height="29" viewBox="0 0 16 29" fill="none" stroke="currentColor" strokeWidth="2.600"><path d="M1.500 1l12 13.500-12 13.500" /></svg>
        </span>
        <span className="text-center text-[#666]">关闭</span>
      </div>
      <div className="mx-auto mt-[17px] h-[11px] w-[399px] translate-x-[-5px] rounded-full bg-[#656766]" />
    </footer>
  );
}

export default function App() {
  return (
    <div className="h-[2400px] w-[1080px] overflow-hidden bg-white font-['Roboto','Noto_Sans_CJK_SC',sans-serif]">
      <StatusBar />
      <Header />
      <PromoBanner />
      <Quote />
      <Notice />
      <Tabs />
      <MaRow />
      <KLineChart />
      <div className="mt-[-1px] flex h-[184px] overflow-hidden">
        <VolumePanel />
        <CostPanel />
      </div>
      <div className="h-[15px] bg-gradient-to-b from-white to-[#f5f5f5]" />
      <SheetHeader />
      <MinuteChart />
      <MinuteVolume />
      <Footer />
    </div>
  );
}
